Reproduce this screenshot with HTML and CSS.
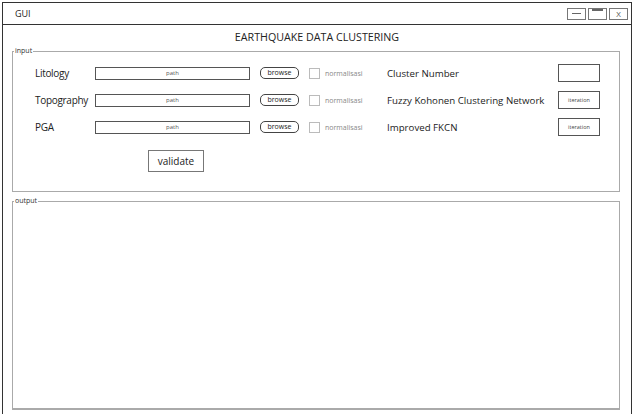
FILE: index.html
```html
<!DOCTYPE html>
<html lang="en">
<head>
  <meta charset="UTF-8" />
  <title>GUI</title>
  <link rel="stylesheet" href="styles.css">
</head>
<body>
  <div class="window">
    <div class="titlebar">
      <span class="title">GUI</span>
      <div class="controls">
        <span class="ctl"><i class="min"></i></span>
        <span class="ctl"><i class="max"></i></span>
        <span class="ctl">X</span>
      </div>
    </div>

    <h1>EARTHQUAKE DATA CLUSTERING</h1>

    <fieldset class="group input-group">
      <legend>input</legend>
      <div class="rows">
        <div class="row">
          <span class="label">Litology</span>
          <span class="path">path</span>
          <span class="browse">browse</span>
          <span class="check"></span>
          <span class="norm">normalisasi</span>
          <span class="right-label">Cluster Number</span>
          <span class="box"></span>
        </div>
        <div class="row">
          <span class="label">Topography</span>
          <span class="path">path</span>
          <span class="browse">browse</span>
          <span class="check"></span>
          <span class="norm">normalisasi</span>
          <span class="right-label">Fuzzy Kohonen Clustering Network</span>
          <span class="box">iteration</span>
        </div>
        <div class="row">
          <span class="label">PGA</span>
          <span class="path">path</span>
          <span class="browse">browse</span>
          <span class="check"></span>
          <span class="norm">normalisasi</span>
          <span class="right-label">Improved FKCN</span>
          <span class="box">iteration</span>
        </div>
      </div>
      <button class="validate">validate</button>
    </fieldset>

    <fieldset class="group output-group">
      <legend>output</legend>
    </fieldset>
  </div>
</body>
</html>
```

FILE: styles.css
```css
body {
  margin: 0;
  font-family: "Open Sans", "Noto Sans", sans-serif;
  color: #222;
  background: #fff;
  overflow: hidden;
}

.window {
  margin: 2px 3px 0 2px;
  height: calc(100vh - 2px);
  border: 1.5px solid #333;
  border-bottom: none;
  overflow: hidden;
}

.titlebar {
  height: 21px;
  border-bottom: 1.5px solid #333;
  display: flex;
  align-items: center;
  justify-content: space-between;
  padding: 0 3px 0 12px;
}

.title {
  font-size: 9px;
}

.controls {
  display: flex;
  gap: 2px;
}

.ctl {
  width: 17px;
  height: 10px;
  border: 1px solid #777;
  display: flex;
  align-items: center;
  justify-content: center;
  font-size: 8px;
  line-height: 1;
  color: #555;
}

.ctl .min {
  width: 9px;
  border-top: 1px solid #666;
}

.ctl .max {
  width: 11px;
  height: 6px;
  border-top: 2px solid #666;
  margin-top: -1px;
}

h1 {
  margin: 5px 0 0;
  text-align: center;
  font-size: 10.7px;
  font-weight: normal;
}

.group {
  margin: 0 11px 0 9px;
  padding: 0;
  border: 1px solid #aaa;
  min-width: 0;
}

.group legend {
  font-size: 7px;
  color: #333;
  padding: 0 1px;
  margin-left: 1px;
  line-height: 8px;
}

.input-group {
  height: 143px;
  margin-top: 3px;
}

.rows {
  display: flex;
  flex-direction: column;
  gap: 9px;
  padding: 9px 0 0 22px;
}

.row {
  display: flex;
  align-items: center;
  height: 18px;
}

.label {
  width: 60px;
  font-size: 10px;
  letter-spacing: -0.3px;
}

.path {
  width: 153px;
  height: 11px;
  border: 1px solid #555;
  font-size: 6px;
  text-align: center;
  line-height: 11px;
  color: #555;
}

.browse {
  margin-left: 10px;
  width: 37px;
  height: 10px;
  border: 1px solid #444;
  border-radius: 5px;
  font-size: 7px;
  line-height: 10px;
  text-align: center;
}

.check {
  margin-left: 10px;
  width: 9px;
  height: 9px;
  border: 1px solid #bbb;
}

.norm {
  margin-left: 5px;
  width: 62px;
  font-size: 7px;
  color: #888;
}

.right-label {
  width: 171px;
  font-size: 9.7px;
}

.box {
  width: 40px;
  height: 16px;
  border: 1px solid #555;
  font-size: 5.5px;
  text-align: center;
  line-height: 16px;
  color: #444;
}

.validate {
  display: block;
  margin: 14px 0 0 135px;
  width: 56px;
  height: 22px;
  background: #fff;
  border: 1px solid #777;
  font-family: inherit;
  font-size: 10px;
  color: #222;
  padding: 0;
}

.output-group {
  margin-top: 5px;
  height: 210px;
  border-bottom: 2px solid #aaa;
}
```
